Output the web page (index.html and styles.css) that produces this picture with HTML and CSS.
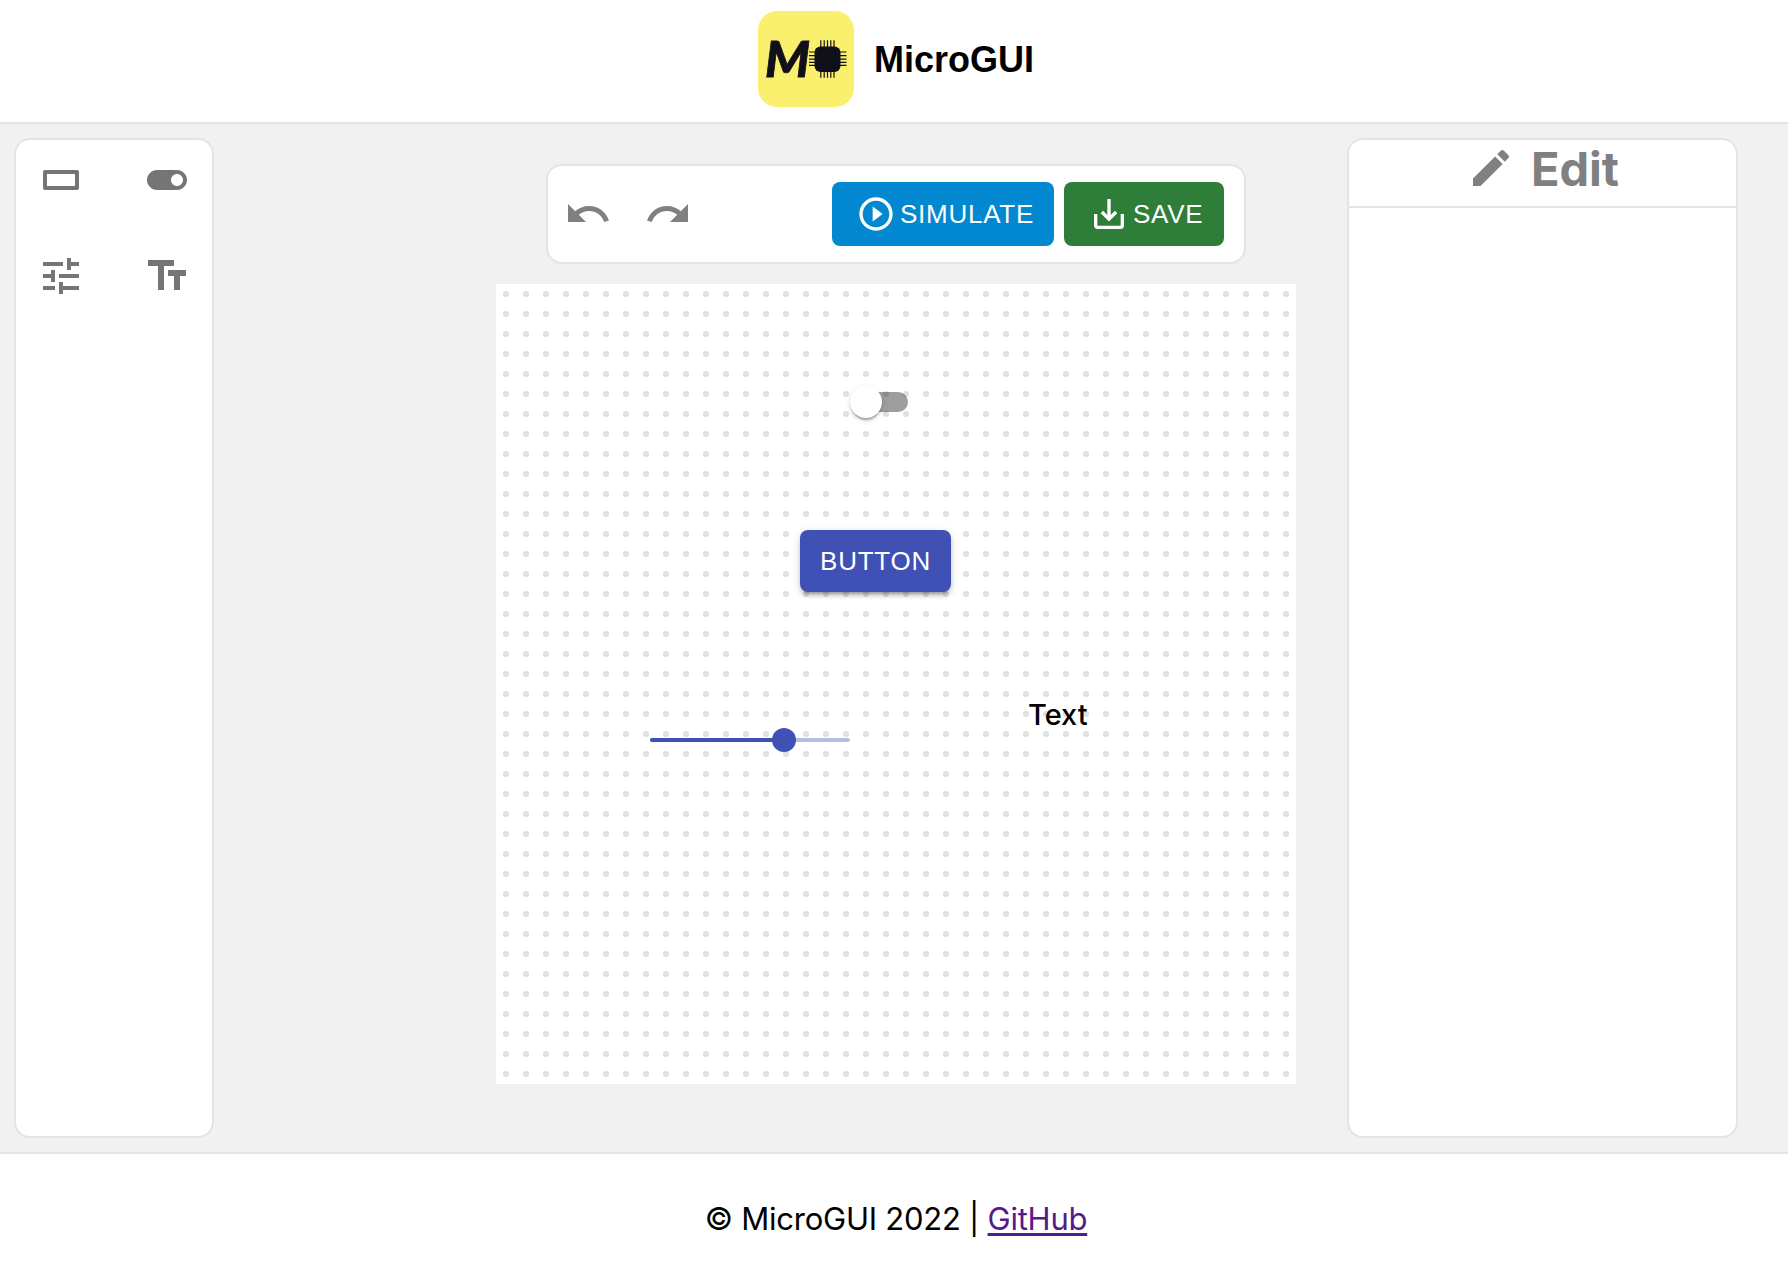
FILE: index.html
```html
<!DOCTYPE html>
<html lang="en">
<head>
<meta charset="utf-8">
<title>MicroGUI</title>
<link rel="stylesheet" href="styles.css">
</head>
<body>
<header class="header">
  <svg class="logo" viewBox="0 0 96 96">
    <rect width="96" height="96" rx="19" fill="#fbf06e"/>
    <text class="logo-letter" x="7" y="65.5" textLength="45" lengthAdjust="spacingAndGlyphs">M</text>
    <rect x="56.5" y="35.5" width="26" height="25.5" rx="6" fill="#10101a"/>
    <path stroke="#10101a" stroke-width="1.2" d="M62.8 29.3v37.4M66.2 29.3v37.4M69.5 29.3v37.4M72.8 29.3v37.4M76 29.3v37.4M51 41h37.5M51 44.6h37.5M51 48.2h37.5M51 51.3h37.5M51 54.4h37.5"/>
  </svg>
  <h1 class="title">MicroGUI</h1>
</header>
<main class="workspace">
  <aside class="palette">
    <svg class="icon" viewBox="0 0 24 24"><path fill-rule="evenodd" d="M20 7H4c-.6 0-1 .4-1 1v8c0 .6.4 1 1 1h16c.6 0 1-.4 1-1V8c0-.6-.4-1-1-1zM5 9h14v6H5z"/></svg>
    <svg class="icon" viewBox="0 0 24 24"><path d="M17 7H7c-2.76 0-5 2.24-5 5s2.24 5 5 5h10c2.76 0 5-2.24 5-5s-2.24-5-5-5zm0 8c-1.66 0-3-1.34-3-3s1.34-3 3-3 3 1.34 3 3-1.34 3-3 3z"/></svg>
    <svg class="icon" viewBox="0 0 24 24"><path d="M3 17v2h6v-2H3zM3 5v2h10V5H3zm10 16v-2h8v-2h-8v-2h-2v6h2zM7 9v2H3v2h4v2h2V9H7zm14 4v-2H11v2h10zm-6-4h2V7h4V5h-4V3h-2v6z"/></svg>
    <svg class="icon" viewBox="0 0 24 24"><path d="M2.5 4v3h5v12h3V7h5V4h-13zm19 5h-9v3h3v7h3v-7h3V9z"/></svg>
  </aside>
  <section class="editor">
    <div class="toolbar">
      <svg class="icon" viewBox="0 0 24 24"><path d="M12.5 8c-2.65 0-5.05.99-6.9 2.6L2 7v9h9l-3.62-3.62c1.39-1.16 3.16-1.88 5.12-1.88 3.54 0 6.55 2.31 7.6 5.5l2.37-.78C21.08 11.03 17.15 8 12.5 8z"/></svg>
      <svg class="icon" viewBox="0 0 24 24"><path d="M18.4 10.6C16.55 8.99 14.15 8 11.5 8c-4.65 0-8.58 3.03-9.96 7.22L3.9 16c1.05-3.19 4.05-5.5 7.6-5.5 1.95 0 3.73.72 5.12 1.88L13 16h9V7l-3.6 3.6z"/></svg>
      <div class="actions">
        <button class="btn simulate"><svg viewBox="0 0 24 24"><path d="M10 16.5l6-4.5-6-4.5v9zM12 2C6.48 2 2 6.48 2 12s4.48 10 10 10 10-4.48 10-10S17.52 2 12 2zm0 18c-4.41 0-8-3.59-8-8s3.59-8 8-8 8 3.59 8 8-3.59 8-8 8z"/></svg><span>SIMULATE</span></button>
        <button class="btn save"><svg viewBox="0 0 24 24"><path d="M19 12v7H5v-7H3v7c0 1.1.9 2 2 2h14c1.1 0 2-.9 2-2v-7h-2zm-6 .67l2.59-2.58L17 11.5l-5 5-5-5 1.41-1.41L11 12.67V3h2z"/></svg><span>SAVE</span></button>
      </div>
    </div>
    <div class="canvas">
      <div class="switch"><span class="switch-thumb"></span></div>
      <button class="canvas-button">BUTTON</button>
      <div class="slider"><span class="slider-fill"></span><span class="slider-thumb"></span></div>
      <span class="canvas-text">Text</span>
    </div>
  </section>
  <aside class="inspector">
    <div class="inspector-head">
      <svg class="icon" viewBox="0 0 24 24"><path d="M3 17.25V21h3.75L17.81 9.94l-3.75-3.75L3 17.25zM20.71 7.04c.39-.39.39-1.02 0-1.41l-2.34-2.34c-.39-.39-1.02-.39-1.41 0l-1.83 1.83 3.75 3.75 1.83-1.83z"/></svg>
      <h2 class="inspector-title">Edit</h2>
    </div>
  </aside>
</main>
<footer class="footer"><p class="credit">© MicroGUI 2022 | <a class="link" href="#">GitHub</a></p></footer>
</body>
</html>
```
FILE: styles.css
```css
* { box-sizing: border-box; }
body {
  margin: 0;
  height: 1270px;
  display: flex;
  flex-direction: column;
  overflow: hidden;
  background: #fff;
  color: #000;
  font-family: Inter, "Liberation Sans", sans-serif;
}
h1, h2, p { margin: 0; }
svg { display: block; flex: none; }
.icon { width: 48px; height: 48px; fill: currentColor; }

.header {
  height: 124px;
  padding: 0 0 4px 4px;
  border-bottom: 2px solid #e1e5e8;
  display: flex;
  align-items: center;
  justify-content: center;
  gap: 20px;
}
.logo { width: 96px; height: 96px; }
.logo-letter { font: italic 900 49px Lato, sans-serif; fill: #10101a; stroke: #10101a; stroke-width: .8px; }
.title { padding-top: 2px; font: bold 36px/40px "Liberation Sans", sans-serif; }

.workspace {
  height: 1028px;
  padding: 14px 50px 14px 14px;
  display: flex;
  background: #f1f1f1;
}
.palette, .inspector, .toolbar {
  background: #fff;
  border: 2px solid #e1e5e8;
  border-radius: 16px;
}
.palette {
  width: 200px;
  padding: 16px 21px;
  display: grid;
  grid-template-columns: 48px 48px;
  justify-content: space-between;
  align-content: start;
  row-gap: 48px;
  color: #757575;
}
.editor {
  width: 800px;
  margin-left: 282px;
  padding-top: 26px;
  display: flex;
  flex-direction: column;
  align-items: center;
  gap: 20px;
}
.toolbar {
  width: 700px;
  height: 100px;
  padding: 0 20px 0 16px;
  display: flex;
  align-items: center;
  gap: 32px;
  color: #808080;
}
.actions { display: flex; gap: 10px; margin-left: auto; }
.btn, .canvas-button {
  border: 0;
  border-radius: 8px;
  color: #fff;
  font: 26px/32px "Liberation Sans", sans-serif;
  letter-spacing: .74px;
}
.btn {
  height: 64px;
  padding: 0 0 0 24px;
  display: flex;
  align-items: center;
  gap: 4px;
}
.btn svg { width: 40px; height: 40px; fill: #fff; }
.simulate { width: 222px; background: #0288d1; }
.save { width: 160px; padding-left: 25px; background: #2e7d38; }

.canvas {
  position: relative;
  width: 800px;
  height: 800px;
  background: #fff radial-gradient(circle at center, #e0e0e0 2.8px, transparent 3.2px) 0 0 / 20px 20px;
}
.switch {
  position: absolute;
  left: 360px;
  top: 108px;
  width: 52px;
  height: 20px;
  border-radius: 10px;
  background: rgba(0, 0, 0, .38);
}
.switch-thumb {
  position: absolute;
  left: -6px;
  top: -6px;
  width: 32px;
  height: 32px;
  border-radius: 50%;
  background: #fff;
  box-shadow: 0 4px 2px -2px rgba(0,0,0,.2), 0 2px 2px rgba(0,0,0,.14), 0 2px 6px rgba(0,0,0,.12);
}
.canvas-button {
  position: absolute;
  left: 304px;
  top: 246px;
  width: 151px;
  height: 62px;
  padding: 0;
  background: #3f51b5;
  box-shadow: 0 6px 2px -4px rgba(0,0,0,.2), 0 4px 4px rgba(0,0,0,.14), 0 2px 10px rgba(0,0,0,.12);
}
.slider {
  position: absolute;
  left: 154px;
  top: 454px;
  width: 200px;
  height: 4px;
  border-radius: 2px;
  background: #b6bde3;
}
.slider-fill {
  position: absolute;
  left: 0;
  top: 0;
  width: 134px;
  height: 4px;
  border-radius: 2px;
  background: #3f51b5;
}
.slider-thumb {
  position: absolute;
  left: 122px;
  top: -10px;
  width: 24px;
  height: 24px;
  border-radius: 50%;
  background: #3f51b5;
}
.canvas-text {
  position: absolute;
  left: 532px;
  top: 411px;
  font-size: 29px;
  line-height: 40px;
  font-weight: 500;
}

.inspector { width: 391px; margin-left: 51px; }
.inspector-head {
  height: 68px;
  padding: 0 0 8px 1px;
  border-bottom: 2px solid #e1e5e8;
  display: flex;
  align-items: center;
  justify-content: center;
  gap: 16px;
  color: #808080;
}
.inspector-head .icon { margin-bottom: 2px; }
.inspector-title { font-size: 47px; line-height: 54px; font-weight: 700; }

.footer {
  flex: 1;
  border-top: 2px solid #e1e5e8;
  display: flex;
  justify-content: center;
  padding: 45px 0 0 4px;
}
.credit { font-size: 31px; line-height: 40px; letter-spacing: -.25px; }
.link { color: #551a8b; text-decoration: underline; text-decoration-thickness: 3px; text-underline-offset: 3px; }
```
